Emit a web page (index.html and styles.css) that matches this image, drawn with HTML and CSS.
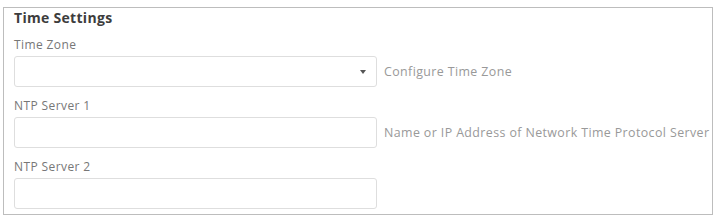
FILE: index.html
```html
<!DOCTYPE html>
<html>
<head>
<meta charset="utf-8">
<link rel="stylesheet" href="styles.css">
</head>
<body>
<div class="panel">
  <div class="title">Time Settings</div>
  <div class="field">
    <div class="label">Time Zone</div>
    <div class="row">
      <div class="control select"><span class="arrow"></span></div>
      <div class="help">Configure Time Zone</div>
    </div>
  </div>
  <div class="field">
    <div class="label">NTP Server 1</div>
    <div class="row">
      <div class="control"></div>
      <div class="help">Name or IP Address of Network Time Protocol Server</div>
    </div>
  </div>
  <div class="field">
    <div class="label">NTP Server 2</div>
    <div class="row">
      <div class="control"></div>
    </div>
  </div>
</div>
</body>
</html>
```
FILE: styles.css
```css
html, body {
  margin: 0;
  padding: 0;
  background: #ffffff;
}
body {
  font-family: "Open Sans", "Noto Sans", sans-serif;
}
.panel {
  margin: 7px 5px 0 3px;
  border: 1px solid #bdbdbd;
  padding: 2px 10px 5px 10px;
}
.title {
  font-size: 14px;
  line-height: 16px;
  font-weight: 700;
  color: #3d3d3d;
  letter-spacing: 0.3px;
}
.field {
  margin-top: 11px;
}
.field:first-of-type {
  margin-top: 13px;
}
.label {
  font-size: 12px;
  line-height: 16px;
  color: #777777;
  margin-bottom: 3px;
  letter-spacing: 0.4px;
}
.row {
  display: flex;
  align-items: center;
  gap: 7px;
}
.control {
  box-sizing: border-box;
  flex: 0 0 363px;
  width: 363px;
  height: 31px;
  border: 1px solid #dedede;
  border-radius: 3px;
  background: #ffffff;
  display: flex;
  align-items: center;
  justify-content: flex-end;
  padding-right: 10px;
}
.arrow {
  width: 0;
  height: 0;
  border-left: 3px solid transparent;
  border-right: 3px solid transparent;
  border-top: 4px solid #555555;
}
.help {
  font-size: 12.4px;
  line-height: 16px;
  color: #999999;
  white-space: nowrap;
  letter-spacing: 0.4px;
}
```
